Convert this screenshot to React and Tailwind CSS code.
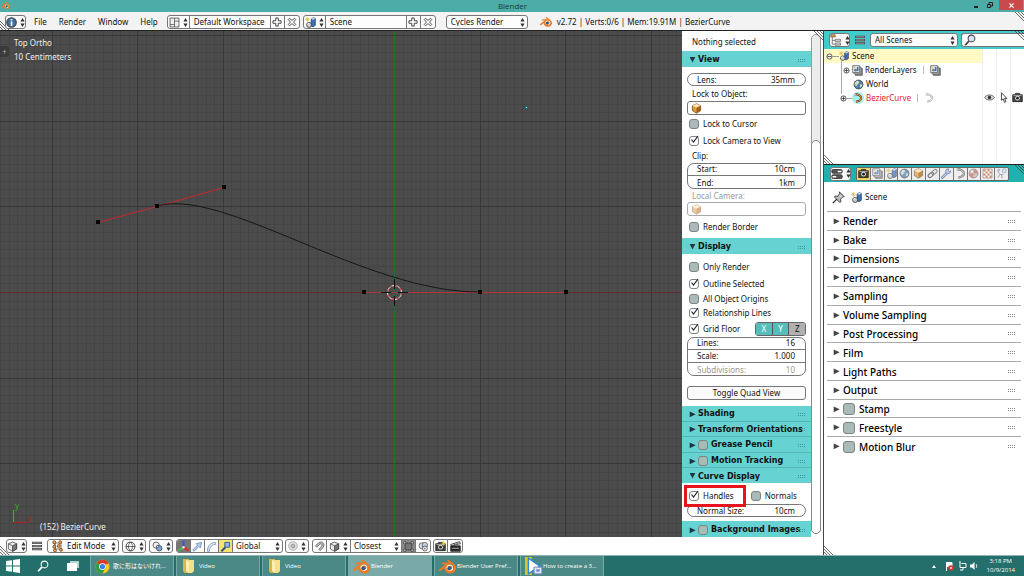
import { clsx } from 'clsx';
import { SiBlender } from 'react-icons/si';

const GRID = 85.6;
const ORIGIN = { x: 394, y: 292 };

const MENUS = ['File', 'Render', 'Window', 'Help'];

const RENDER_PANELS = [
    { label: 'Render' },
    { label: 'Bake' },
    { label: 'Dimensions' },
    { label: 'Performance' },
    { label: 'Sampling' },
    { label: 'Volume Sampling' },
    { label: 'Post Processing' },
    { label: 'Film' },
    { label: 'Light Paths' },
    { label: 'Output' },
    { label: 'Stamp', toggle: true },
    { label: 'Freestyle', toggle: true },
    { label: 'Motion Blur', toggle: true },
];

/* ---------- icons ---------- */

function Icon({ children, className = 'size-[11px]' }) {
    return (
        <svg viewBox="0 0 16 16" className={clsx('shrink-0', className)} fill="none" aria-hidden="true">
            {children}
        </svg>
    );
}

const UpDown = () => (
    <svg viewBox="0 0 5 9" className="h-[9px] w-[5px] shrink-0" fill="#333" aria-hidden="true">
        <path d="M2.5 0 4.6 3.5H.4zM2.5 9 .4 5.5h4.2z" />
    </svg>
);

const Triangle = ({ open, className }) => (
    <svg viewBox="0 0 8 8" className={clsx('size-[7px] shrink-0', className)} fill="currentColor" aria-hidden="true">
        <path d={open ? 'M.8 0h6.4L4 6.4z' : 'M.8.6 7.6 3.8.8 7z'} />
    </svg>
);

const Grip = ({ className = 'text-[#3c9c9a]' }) => (
    <svg viewBox="0 0 8 5" className={clsx('h-[5px] w-[8px] shrink-0', className)} fill="currentColor" shapeRendering="crispEdges" aria-hidden="true">
        {[0, 2, 4, 6].map((x) => (
            <path key={x} d={`M${x} 1h1v1h-1zM${x} 3h1v1h-1z`} />
        ))}
    </svg>
);

// Diagonal drag handle in the corner of an editor
const Corner = ({ className }) => (
    <svg viewBox="0 0 9 9" className={clsx('pointer-events-none absolute size-[9px]', className)} stroke="#444" strokeWidth=".8" aria-hidden="true">
        <path d="M0 0 9 9M3 0l6 6M6 0l3 3" />
    </svg>
);

const CubeIcon = ({ faded, className }) => (
    <Icon className={clsx(className || 'size-[11px]', faded && 'opacity-50')}>
        <path d="M8 1l6 3v7l-6 4-6-4V4z" fill="#e09a3e" stroke="#5c3a14" />
        <path d="M8 1l6 3-6 3-6-3z" fill="#ffe6b4" />
        <path d="M8 7l6-3v7l-6 4z" fill="#a85f14" />
    </Icon>
);

const GrayCubeIcon = () => (
    <Icon>
        <path d="M8 1.5l6 2.5v7.5L8 15l-6-3.5V4z" fill="#eee" stroke="#333" />
        <path d="M8 7l6-3v7.5L8 15z" fill="#777" stroke="#333" />
        <path d="M2 4l6 3" stroke="#333" />
    </Icon>
);

const SceneIcon = ({ className }) => (
    <Icon className={className}>
        <path d="M3.5 0v7M0 3.5h7M1.2 1.2l4.6 4.6M5.8 1.2 1.2 5.8" stroke="#e3b83c" />
        <path d="M9 3l3-2 3 1v10l-3 2-3-1z" fill="#3a72b8" stroke="#1d2f4d" />
        <path d="M9 3l3-2 3 1-3 2z" fill="#cfe2fa" />
        <circle cx="6" cy="11.5" r="3.7" fill="#ccc" stroke="#222" />
        <path d="M4 11a2 2 0 0 1 2-2" stroke="#fff" strokeWidth="1.4" />
    </Icon>
);

const LayersIcon = () => (
    <Icon>
        <path d="M5 5h10v10H5z" fill="#999" stroke="#444" />
        <path d="M3 3h10v10H3z" fill="#ddd" stroke="#444" />
        <path d="M1 1h10v10H1z" fill="#e9f0fa" stroke="#444" />
        <circle cx="5" cy="7.5" r="2" fill="#777" />
        <path d="M7 3h2.500v6H7z" fill="#3a72b8" />
        <path d="M3.500 2v3M2 3.500h3" stroke="#e3b83c" />
    </Icon>
);

const WorldIcon = () => (
    <Icon>
        <circle cx="8" cy="8" r="6.5" fill="#4f7da6" stroke="#333" />
        <path d="M4 4c3-2 5-1 5 1S6 7 6 9 4 11 3 9s-1-3 1-5zM10 8c2-1 4 0 3 2s-3 3-3 1z" fill="#c9d8c4" />
        <path d="M4.500 4.500c1-1.200 2-1.400 3-1.400" stroke="#fff" />
    </Icon>
);

const CurveIcon = ({ color = '#aaa', className }) => (
    <Icon className={className}>
        <path d="M4 2c5 0 9 3 9 6s-3 5-8 6" stroke="#333" strokeWidth="3" />
        <path d="M4 2c5 0 9 3 9 6s-3 5-8 6" stroke={color} strokeWidth="1.700" />
        <circle cx="4" cy="2.500" r="1.400" fill="#eee" stroke="#555" strokeWidth=".700" />
    </Icon>
);

const CameraIcon = () => (
    <Icon>
        <path d="M1 4h3l1-2h6l1 2h3v10H1z" fill="#444" stroke="#111" />
        <path d="M2 5h12" stroke="#ccc" />
        <circle cx="8" cy="9" r="3.400" fill="#ddd" />
        <circle cx="8" cy="9" r="2" fill="#222" />
    </Icon>
);

const RenderImageIcon = () => (
    <Icon>
        <path d="M1 4h3l1-2h6l1 2h3v10H1z" fill="#444" stroke="#111" />
        <path d="M2 5h12" stroke="#ccc" />
        <circle cx="8" cy="9" r="3.400" fill="#ddd" />
        <circle cx="8" cy="9" r="2" fill="#222" />
        <path d="M12.500 0v7M9 3.500h7M10 1l5 5M15 1l-5 5" stroke="#e8c93c" />
    </Icon>
);

const RenderAnimIcon = () => (
    <Icon>
        <path d="M1 7h14v8H1z" fill="#333" stroke="#111" />
        <path d="M1 5l13-4 1 3L2 7z" fill="#ddd" stroke="#111" />
        <path d="M5 3.500l2 2M9 2.300l2 2M3 9h10M3 12h10" stroke="#111" />
        <path d="M3 10.500h10" stroke="#eee" />
    </Icon>
);

const LinkIcon = () => (
    <Icon>
        <rect x="1" y="8" width="9" height="5" rx="2.500" transform="rotate(-40 5 10)" stroke="#444" strokeWidth="1.600" />
        <rect x="6" y="3" width="9" height="5" rx="2.500" transform="rotate(-40 11 5.500)" stroke="#666" strokeWidth="1.600" />
    </Icon>
);

const WrenchIcon = () => (
    <Icon>
        <path d="M2 14l7-7" stroke="#33507e" strokeWidth="4" strokeLinecap="round" />
        <path d="M2 14l7-7" stroke="#a9c5ee" strokeWidth="2" strokeLinecap="round" />
        <path d="M14 4a3.600 3.600 0 1 1-3-3L10.500 4l2 1.500z" fill="#a9c5ee" stroke="#33507e" />
    </Icon>
);

const MaterialIcon = () => (
    <Icon>
        <circle cx="8" cy="8" r="6.500" fill="#bbb" stroke="#555" />
        <path d="M8 8V1.500A6.500 6.500 0 0 1 14.500 8zM8 8v6.500A6.500 6.500 0 0 1 1.500 8z" fill="#c96a64" />
        <circle cx="6" cy="5" r="2" fill="#fff" opacity=".6" />
    </Icon>
);

const TextureIcon = () => (
    <Icon>
        <path d="M1.500 1.500h13v13h-13z" fill="#fff" stroke="#8a4a34" />
        {[2, 5, 8, 11].map((x, i) =>
            [2, 5, 8, 11].map((y, j) => ((i + j) % 2 ? null : <path key={`${x}-${y}`} d={`M${x} ${y}h3v3h-3z`} fill="#b0603c" />)),
        )}
    </Icon>
);

const ParticlesIcon = () => (
    <Icon>
        <path d="M3 3c0 5 4 8 8 6M6 9l-3 5M8 10l1 5" stroke="#555" />
        <circle cx="12" cy="4" r="3" fill="#cfe0f5" stroke="#5d84b8" />
        <circle cx="4" cy="3" r="1.500" fill="#cfe0f5" stroke="#5d84b8" />
    </Icon>
);

const PinIcon = () => (
    <Icon className="size-[13px]">
        <path d="M9 1l6 6-2 .500-2.500 2.500.500 3-1.500 1-6.500-6.500 1-1.500 3 .500L9.500 3z" fill="#bbb" stroke="#222" />
        <path d="M6 10l-5 5" stroke="#222" strokeWidth="1.500" />
        <path d="M9 5l3 3" stroke="#fff" />
    </Icon>
);

const OutlinerIcon = () => (
    <Icon className="size-[12px]">
        <path d="M1 1h6v3H1z" fill="#e39a3c" stroke="#555" strokeWidth=".8" />
        <path d="M3 4v9.500h4M3 8.500h4" stroke="#555" />
        <path d="M7 7h7v3H7zM7 12h7v3H7z" fill="#ccc" stroke="#555" strokeWidth=".8" />
    </Icon>
);

const PropertiesIcon = () => (
    <Icon className="size-[12px]">
        <rect x="1" y="2" width="14" height="5" rx="2" fill="#555" stroke="#222" />
        <rect x="1" y="9" width="14" height="5" rx="2" fill="#555" stroke="#222" />
        <path d="M9 3.500h5v2H9zM2 10.500h5v2H2z" fill="#fff" />
    </Icon>
);

const InfoIcon = () => (
    <Icon className="size-[11px]">
        <circle cx="8" cy="8" r="7" fill="#3f6f9e" stroke="#444" strokeWidth="1.500" />
        <path d="M8 3v2M8 6.500V13" stroke="#fff" strokeWidth="2.500" />
    </Icon>
);

const LayoutIcon = () => (
    <Icon>
        <path d="M1.500 1.500h13v13h-13z" fill="#eee" stroke="#333" />
        <path d="M8 1.500v13M8 6h6.500M1.500 11h6.500" stroke="#444" />
    </Icon>
);

const MenuLines = () => (
    <Icon className="size-[10px]">
        <path d="M0 3h16M0 8h16M0 13h16" stroke="#444" strokeWidth="3.600" />
        <path d="M1 3h14M1 8h14M1 13h14" stroke="#aaa" strokeWidth="1.400" />
    </Icon>
);

const SearchIcon = ({ color = '#444', fill = 'none', className }) => (
    <Icon className={className}>
        <path d="M6.500 9.500 1.500 15" stroke={color} strokeWidth="2.400" />
        <circle cx="10" cy="6" r="4.500" fill={fill} stroke={color} strokeWidth="1.400" />
    </Icon>
);

const PlusIcon = () => (
    <Icon className="size-[10px]">
        <path d="M6 1.500h4V6h4.500v4H10v4.500H6V10H1.500V6H6z" fill="#fff" stroke="#333" strokeWidth="1.400" />
    </Icon>
);

const CrossIcon = () => (
    <Icon className="size-[10px]">
        <path d="M2 4l2-2 4 3.500L12 2l2 2-3.500 4L14 12l-2 2-4-3.500L4 14l-2-2 3.500-4z" fill="#fff" stroke="#333" strokeWidth="1.400" />
    </Icon>
);

const EditModeIcon = () => (
    <Icon className="size-[12px]">
        <path d="M4 4l8 0v8H4zM4 4v9" stroke="#555" />
        {[[3, 3], [11, 3], [3, 9], [9, 8], [4, 14], [12, 13]].map(([x, y]) => (
            <circle key={`${x}-${y}`} cx={x} cy={y} r="2" fill="#f0a45a" stroke="#6d3d12" />
        ))}
    </Icon>
);

const WireIcon = () => (
    <Icon>
        <circle cx="8" cy="8" r="6.500" stroke="#333" strokeWidth="1.300" />
        <path d="M1.500 8h13M8 1.500c-4 4-4 9 0 13M8 1.500c4 4 4 9 0 13" stroke="#333" />
    </Icon>
);

const PivotIcon = () => (
    <Icon>
        <circle cx="6" cy="6" r="4.500" fill="#eee" stroke="#333" />
        <circle cx="10.500" cy="10.500" r="4" fill="#7ba6dd" stroke="#333" />
        <circle cx="8" cy="8" r="1.500" fill="#fff" stroke="#333" />
    </Icon>
);

const ManipulatorIcon = () => (
    <Icon className="size-[13px]">
        <path d="M8 9V1" stroke="#3456d8" strokeWidth="2.600" />
        <path d="M8 9l-6.500 4" stroke="#3fbf3f" strokeWidth="2.600" />
        <path d="M8 9l6.500 4" stroke="#e02a2a" strokeWidth="2.600" />
        <circle cx="8" cy="9" r="1.500" fill="#eee" />
    </Icon>
);

const TranslateIcon = () => (
    <Icon>
        <path d="M1 13l7-7-2-2 8-2-2 8-2-2-7 7z" fill="#b5cdf0" stroke="#5d7ba8" />
    </Icon>
);

const RotateIcon = () => (
    <Icon>
        <path d="M2 15C2 7 7 2 14 2v3C9 5 5 9 5 15z" fill="#dbe8fa" stroke="#6883a8" />
    </Icon>
);

const ScaleIcon = () => (
    <Icon>
        <path d="M2 15l6-6" stroke="#35558a" strokeWidth="3" />
        <path d="M7 2h7v7H7z" fill="#8fb4ea" stroke="#35558a" strokeWidth="1.300" />
    </Icon>
);

const ProportionalIcon = () => (
    <Icon className="size-[10px]">
        <circle cx="8" cy="8" r="7" fill="#ddd" stroke="#999" />
        <circle cx="8" cy="8" r="3" fill="#bbb" stroke="#888" />
    </Icon>
);

const MagnetIcon = () => (
    <Icon>
        <path d="M2 7l5-4.500c5-3.500 10 2 6.500 6.500L9 14l-2-2 4-4.500c2-2-.500-4.500-2.500-3L4 9z" fill="#bbb" stroke="#555" />
    </Icon>
);

const SnapTargetIcon = () => (
    <Icon>
        <rect x="3" y="3" width="10" height="10" stroke="#111" strokeDasharray="2 1" fill="#777" />
        <path d="M1 1h3v3H1zM12 1h3v3h-3zM1 12h3v3H1zM12 12h3v3h-3z" fill="#ddd" stroke="#222" strokeWidth=".800" />
    </Icon>
);

const SnapPeelIcon = () => (
    <Icon>
        <circle cx="6" cy="7" r="4.500" fill="#ddd" stroke="#444" />
        <circle cx="10" cy="6" r="4" fill="#bcd2ee" stroke="#444" />
        <circle cx="10" cy="11" r="3.500" fill="#eee" stroke="#333" />
        <circle cx="10" cy="11" r="1" fill="#333" />
    </Icon>
);

const EyeIcon = () => (
    <Icon>
        <path d="M1 8c3-5 11-5 14 0-3 5-11 5-14 0z" fill="#ddd" stroke="#333" />
        <circle cx="8" cy="8" r="2.500" fill="#333" />
    </Icon>
);

const ArrowIcon = () => (
    <Icon>
        <path d="M5 1v11l2.500-2 2 5 2-1-2-4.500H13z" fill="#fff" stroke="#222" strokeWidth="1.200" />
    </Icon>
);

const BlenderLogo = ({ className }) => (
    <svg viewBox="0 0 24 24" className={clsx('shrink-0', className)} aria-hidden="true">
        <circle cx="14.500" cy="14.500" r="5.500" fill="#fff" />
        <SiBlender width="24" height="24" size={24} color="#ee7a22" />
        <circle cx="14.500" cy="14.500" r="2.800" fill="#1c5c9c" />
    </svg>
);

const ChromeLogo = () => (
    <Icon className="size-[15px]">
        <circle cx="8" cy="8" r="7.500" fill="#f2c81d" />
        <path d="M8 8 1.500 4.200A7.500 7.500 0 0 1 14.500 4.200z" fill="#dd3a2c" />
        <path d="M8 8 1.500 4.200A7.500 7.500 0 0 0 8 15.500L11 9.500z" fill="#2f9e4b" />
        <path d="M8 4.500h6.700L14.200 4H8z" fill="#dd3a2c" />
        <circle cx="8" cy="8" r="3.600" fill="#fff" />
        <circle cx="8" cy="8" r="2.800" fill="#3f7fe0" />
    </Icon>
);

const FolderIcon = () => (
    <Icon className="size-[16px]">
        <path d="M2 1h6v14H3.500L2 13z" fill="#d8b84a" />
        <path d="M5 2h8v11l-2 2H8V4z" fill="#f7e08a" />
        <path d="M8 4l-3-2v11l3 2z" fill="#fdf0b4" />
    </Icon>
);

const PlayerIcon = () => (
    <Icon className="size-[18px]">
        <path d="M0 0h6v16H0z" fill="#d9c52a" />
        <path d="M3 1l10 7-10 7z" fill="#fff" stroke="#2e86d8" strokeWidth="1.200" />
        <path d="M8 9h7v6H8z" fill="#dfe6f5" stroke="#6c86c0" strokeWidth=".800" />
        <path d="M10 11h3v2h-3z" fill="#6c86c0" />
    </Icon>
);

/* ---------- controls ---------- */

function IconMenu({ label, children, className }) {
    return (
        <button type="button" aria-label={label} className={clsx('flex h-[14px] items-center justify-center gap-[3px] rounded-[3px] border border-[#777] bg-[#fafafa]', className)}>
            {children}
            <UpDown />
        </button>
    );
}

function Dropdown({ label, value, icon, className }) {
    return (
        <label className={clsx('flex h-[14px] items-center gap-[3px] rounded-[3px] border border-[#777] bg-[#fdfdfd] pr-[2px] pl-[4px]', className)}>
            {icon}
            <select aria-label={label} className="h-full min-w-0 flex-1 appearance-none bg-transparent leading-none outline-none">
                <option>{value}</option>
            </select>
            <UpDown />
        </label>
    );
}

function DataBlock({ label, value, icon }) {
    return (
        <div className="flex h-[14px] w-[133px] items-stretch divide-x divide-[#777] overflow-hidden rounded-[3px] border border-[#777] bg-[#fdfdfd]">
            <button type="button" aria-label={`Browse ${label}`} className="flex w-[22px] items-center justify-center gap-[3px]">
                {icon}
                <UpDown />
            </button>
            <input aria-label={label} defaultValue={value} className="min-w-0 flex-1 bg-transparent px-[4px] outline-none" />
            <button type="button" aria-label={`Add ${label}`} className="flex w-[14px] items-center justify-center"><PlusIcon /></button>
            <button type="button" aria-label={`Remove ${label}`} className="flex w-[14px] items-center justify-center"><CrossIcon /></button>
        </div>
    );
}

function Tick({ label, checked = false, size = 'size-[10px]' }) {
    return (
        <span className="relative flex shrink-0">
            <input
                type="checkbox"
                aria-label={label}
                defaultChecked={checked}
                className={clsx('peer appearance-none rounded-[3px] border border-[#7a8584] bg-[#a9bab9] checked:bg-white', size)}
            />
            <svg viewBox="0 0 9 9" className="pointer-events-none absolute -top-px left-px hidden size-[9px] peer-checked:block" fill="none" stroke="#222" strokeWidth="1.200">
                <path d="M1.500 4.500 3.500 7 8 1" />
            </svg>
        </span>
    );
}

function CheckRow({ label, checked, className = 'h-[17px]' }) {
    return (
        <label className={clsx('flex items-center gap-[4px] pl-[2px]', className)}>
            <Tick label={label} checked={checked} />
            {label}
        </label>
    );
}

function NumberRow({ label, value, disabled }) {
    return (
        <label className={clsx('flex h-[13px] items-center pr-[11px] pl-[10px]', disabled && 'text-[#999]')}>
            <span className="shrink-0">{label}</span>
            <input defaultValue={value} disabled={disabled} className="w-0 min-w-0 flex-1 bg-transparent text-right outline-none" />
        </label>
    );
}

function NumberGroup({ rows, className }) {
    return (
        <div className={clsx('flex flex-col divide-y divide-[#777] overflow-hidden rounded-[7px] outline outline-[#777] -outline-offset-1', className)}>
            {rows.map((row) => (
                <NumberRow key={row.label} {...row} />
            ))}
        </div>
    );
}

function ObjectField({ label, disabled }) {
    return (
        <>
            <span className={clsx('flex items-center pl-[5px]', disabled ? 'h-[13px] text-[#999]' : 'h-[15px]')}>{label}</span>
            <label className={clsx('flex h-[14px] items-center rounded-[3px] border pl-[3px]', disabled ? 'border-[#aaa]' : 'border-[#777]')}>
                <CubeIcon faded={disabled} />
                <input aria-label={label} disabled={disabled} className="min-w-0 flex-1 bg-transparent outline-none" />
            </label>
        </>
    );
}

function PanelHeader({ label, open, toggle, className = 'h-[16px]' }) {
    return (
        <div className={clsx("flex items-center bg-[#66d3d2] pt-[2px] pr-[5px] pl-[7px] font-['DejaVu_Sans',sans-serif] text-[8px] leading-none font-bold", className)}>
            <button type="button" aria-expanded={!!open} aria-label={label} className="mr-[2px] flex text-[#234]">
                <Triangle open={open} />
            </button>
            {toggle && (
                <span className="mr-[3px] flex">
                    <Tick label={`Enable ${label}`} />
                </span>
            )}
            <h2 className="min-w-0 flex-1 overflow-visible whitespace-nowrap">{label}</h2>
            <Grip />
        </div>
    );
}

/* ---------- editors ---------- */

function TitleBar() {
    return (
        <header className="flex h-[12px] shrink-0 items-start bg-[#4cada8] font-['Open_Sans',sans-serif] text-[#1b3b3a]">
            <div className="flex flex-1 pt-px pl-px"><BlenderLogo className="size-[9px]" /></div>
            <h1 className="text-[8px] leading-[12px]">Blender</h1>
            <div className="flex flex-1 items-center justify-end">
                <button type="button" aria-label="Minimize" className="flex h-[10px] w-[14px] items-center justify-center">
                    <span className="mt-[3px] h-[2px] w-[4px] bg-[#222]" />
                </button>
                <button type="button" aria-label="Restore" className="flex h-[10px] w-[14px] items-center justify-center">
                    <svg viewBox="0 0 6 6" className="size-[6px]" fill="none" stroke="#222"><path d="M.500 2.500h3v3h-3zM2 2V.500h3.500V4H4" /></svg>
                </button>
                <button type="button" aria-label="Close" className="mr-px ml-[2px] flex h-[10px] w-[24px] items-center justify-center bg-[#c84b4b]">
                    <svg viewBox="0 0 6 6" className="size-[5px]" stroke="#fff" strokeWidth="1.400"><path d="M.500.500l5 5M5.500.500l-5 5" /></svg>
                </button>
            </div>
        </header>
    );
}

function InfoBar() {
    return (
        <div className="relative flex h-[19px] shrink-0 items-center border-b border-[#222] bg-[#f3f3f3] pt-[2px] pl-[5px]">
            <Corner className="bottom-0 left-0 rotate-180" />
            <IconMenu label="Editor type" className="relative w-[21px]"><InfoIcon /></IconMenu>
            <nav className="ml-[8px] flex gap-[12px]">
                {MENUS.map((menu) => (
                    <button key={menu} type="button">{menu}</button>
                ))}
            </nav>
            <div className="ml-[9px] flex gap-[3px]">
                <DataBlock label="Screen" value="Default Workspace" icon={<LayoutIcon />} />
                <DataBlock label="Scene" value="Scene" icon={<SceneIcon />} />
            </div>
            <Dropdown label="Render engine" value="Cycles Render" className="ml-[10px] w-[82px]" />
            <BlenderLogo className="ml-[12px] size-[12px]" />
            <p className="ml-[5px] whitespace-nowrap">v2.72 | Verts:0/6 | Mem:19.91M | BezierCurve</p>
            <Corner className="top-0 right-0" />
        </div>
    );
}

function gridLines(from, to) {
    const lines = [];
    for (let i = from; i <= to; i++) {
        lines.push({ i, offset: Math.round((i * GRID) / 10) });
    }
    return lines;
}

function Canvas() {
    const lines = gridLines(-100, 200);
    const points = [[98, 222], [157, 206], [224, 187], [364, 292], [480, 292], [566, 292]];

    return (
        <div className="relative min-w-0 flex-1 overflow-hidden bg-[#4b4b4b] text-[#eee]">
            {/* the drawing keeps window coordinates, hence the shift by the bars above */}
            <svg className="absolute inset-0 size-full" aria-label="3D view">
                <g transform="translate(0 -31)">
                    <g shapeRendering="crispEdges">
                        {[false, true].map((major) =>
                            lines.filter(({ i }) => (i % 10 === 0) === major).map(({ i, offset }) => (
                                <g key={i} fill={major ? '#383838' : '#444'}>
                                    <rect x={ORIGIN.x + offset} y="0" width="1" height="3000" />
                                    <rect x="0" y={ORIGIN.y + offset} width="4000" height="1" />
                                </g>
                            )),
                        )}
                        <rect x="0" y={ORIGIN.y} width="4000" height="1" fill="#642c2f" />
                        <rect x={ORIGIN.x} y="0" width="1" height="3000" fill="#2c6a2e" />
                        <path d="M364 292.500h202" stroke="#b5323a" />
                    </g>
                    <path d="M98 222.500 157 206.500 224 187.500" stroke="#c8262e" fill="none" />
                    <path d="M157 206C224 187 365 292.500 480 292" stroke="#161616" fill="none" />
                    {points.map(([x, y]) => (
                        <rect key={x} x={x - 2} y={y - 2} width="4" height="4" fill="#000" />
                    ))}
                    <circle cx="394.500" cy="292.500" r="7" fill="none" stroke="#eee" />
                    <circle cx="394.500" cy="292.500" r="7" fill="none" stroke="#d22" strokeDasharray="2.750 2.750" />
                    <path d="M381 292.500h10M398 292.500h10M394.500 279v10M394.500 296v10" stroke="#111" />
                    <rect x="525" y="106" width="3" height="3" fill="#1c6d70" />
                    <rect x="526" y="107" width="1" height="1" fill="#7ff" />
                    <path d="M13.500 523V510" stroke="#3fae28" />
                    <path d="M13 522.500h14" stroke="#b52020" />
                    <text x="15" y="509" fill="#3fae28" fontSize="8">y</text>
                    <text x="28" y="522" fill="#b52020" fontSize="8">x</text>
                </g>
            </svg>
            <button type="button" aria-label="Show tool shelf" className="absolute top-[15px] left-0 flex h-[11px] w-[9px] items-center justify-center rounded-r-[3px] bg-[#3a3a3a] leading-none text-[#aaa]">
                +
            </button>
            <p className="absolute top-[7px] left-[14px] leading-[10px]">Top Ortho</p>
            <p className="absolute top-[21px] left-[14px] leading-[10px]">10 Centimeters</p>
            <p className="absolute bottom-[5px] left-[40px] leading-[10px]">(152) BezierCurve</p>
        </div>
    );
}

function PropertiesShelf() {
    return (
        <aside className="flex w-[141px] shrink-0 bg-white">
            <div className="relative flex w-[129px] flex-col">
                <p className="flex h-[20px] items-center pt-[2px] pl-[10px]">Nothing selected</p>

                <PanelHeader label="View" open />
                <div className="flex flex-col px-[5px] pt-[6px]">
                    <NumberGroup rows={[{ label: 'Lens:', value: '35mm' }]} />
                    <ObjectField label="Lock to Object:" />
                    <CheckRow label="Lock to Cursor" />
                    <CheckRow label="Lock Camera to View" checked />
                    <span className="flex h-[14px] items-center pl-[5px]">Clip:</span>
                    <NumberGroup rows={[{ label: 'Start:', value: '10cm' }, { label: 'End:', value: '1km' }]} />
                    <ObjectField label="Local Camera:" disabled />
                    <CheckRow label="Render Border" className="h-[22px]" />
                </div>

                <PanelHeader label="Display" open />
                <div className="flex flex-col px-[5px] pt-[4px] pb-[6px]">
                    <CheckRow label="Only Render" />
                    <CheckRow label="Outline Selected" checked />
                    <CheckRow label="All Object Origins" className="h-[14px]" />
                    <CheckRow label="Relationship Lines" checked className="h-[14px]" />
                    <div className="flex items-center justify-between">
                        <CheckRow label="Grid Floor" checked />
                        <div className="flex h-[14px] w-[51px] divide-x divide-[#555] overflow-hidden rounded-[3px] border border-[#666]">
                            <button type="button" className="flex-1 bg-[#57bdbb] leading-none text-white">X</button>
                            <button type="button" className="flex-1 bg-[#57bdbb] leading-none text-white">Y</button>
                            <button type="button" className="flex-1 bg-[#b0b0b0] leading-none">Z</button>
                        </div>
                    </div>
                    <NumberGroup
                        rows={[
                            { label: 'Lines:', value: '16' },
                            { label: 'Scale:', value: '1.000' },
                            { label: 'Subdivisions:', value: '10', disabled: true },
                        ]}
                    />
                    <button type="button" className="mt-[10px] h-[14px] rounded-[3px] border border-[#777] bg-[#fafafa] leading-none">Toggle Quad View</button>
                </div>

                <div className="flex h-[77px] flex-col divide-y divide-[#55b5b4]">
                    <PanelHeader label="Shading" className="flex-1" />
                    <PanelHeader label="Transform Orientations" className="flex-1" />
                    <PanelHeader label="Grease Pencil" toggle className="flex-1" />
                    <PanelHeader label="Motion Tracking" toggle className="flex-1" />
                    <PanelHeader label="Curve Display" open className="flex-1" />
                </div>
                <div className="relative flex flex-col px-[5px] pt-[4px] pb-[4px]">
                    <div className="flex gap-[15px]">
                        <CheckRow label="Handles" checked />
                        <CheckRow label="Normals" />
                    </div>
                    <NumberGroup rows={[{ label: 'Normal Size:', value: '10cm' }]} />
                    <div className="pointer-events-none absolute top-[2px] left-[2px] h-[22px] w-[62px] border-[3px] border-[#e8141c]" />
                </div>
                <PanelHeader label="Background Images" toggle />
            </div>
            <div className="relative flex flex-1 flex-col pt-[3px] pr-[2px] pb-[3px]">
                <div className="flex flex-1 flex-col rounded-[5px] border border-[#999] bg-[#ececec] pt-[105px]">
                    <div className="-mx-px -mb-px flex-1 rounded-[5px] border border-[#888] bg-white" />
                </div>
                <Corner className="top-0 right-0" />
            </div>
        </aside>
    );
}

const toolButton = 'flex w-[14px] items-center justify-center';

function ViewHeader() {
    return (
        <div className="relative flex h-[18px] shrink-0 items-center bg-white pl-[6px]">
            <Corner className="bottom-0 left-0 rotate-180" />
            <IconMenu label="Editor type" className="relative w-[21px]"><GrayCubeIcon /></IconMenu>
            <button type="button" aria-label="Menus" className="ml-[5px] flex"><MenuLines /></button>
            <Dropdown label="Mode" value="Edit Mode" icon={<EditModeIcon />} className="ml-[5px] w-[72px] pl-[2px]" />
            <IconMenu label="Viewport shading" className="ml-[3px] w-[24px]"><WireIcon /></IconMenu>
            <IconMenu label="Pivot point" className="ml-[3px] w-[24px]"><PivotIcon /></IconMenu>
            <div className="ml-[3px] flex h-[14px] divide-x divide-[#777] overflow-hidden rounded-[3px] border border-[#777]">
                <button type="button" aria-label="Manipulator" className={clsx(toolButton, 'bg-[#777]')}><ManipulatorIcon /></button>
                <button type="button" aria-label="Translate" className={toolButton}><TranslateIcon /></button>
                <button type="button" aria-label="Rotate" className={toolButton}><RotateIcon /></button>
                <button type="button" aria-label="Scale" className={clsx(toolButton, 'bg-[#f4e36e]')}><ScaleIcon /></button>
                <label className="flex w-[49px] items-center pr-[2px] pl-[3px]">
                    <select aria-label="Orientation" className="min-w-0 flex-1 appearance-none bg-transparent leading-none outline-none">
                        <option>Global</option>
                    </select>
                    <UpDown />
                </label>
            </div>
            <IconMenu label="Proportional editing" className="ml-[2px] w-[24px]"><ProportionalIcon /></IconMenu>
            <div className="ml-[3px] flex h-[14px] divide-x divide-[#777] overflow-hidden rounded-[3px] border border-[#777]">
                <button type="button" aria-label="Snap" className={toolButton}><MagnetIcon /></button>
                <button type="button" aria-label="Snap element" className="flex w-[24px] items-center justify-center gap-[3px]"><GrayCubeIcon /><UpDown /></button>
                <label className="flex w-[51px] items-center pr-[2px] pl-[3px]">
                    <select aria-label="Snap target" className="min-w-0 flex-1 appearance-none bg-transparent leading-none outline-none">
                        <option>Closest</option>
                    </select>
                    <UpDown />
                </label>
                <button type="button" aria-label="Project elements" className={clsx(toolButton, 'bg-[#8a8a8a]')}><SnapTargetIcon /></button>
                <button type="button" aria-label="Peel object" className={toolButton}><SnapPeelIcon /></button>
            </div>
            <div className="ml-[2px] flex h-[14px] divide-x divide-[#777] overflow-hidden rounded-[3px] border border-[#777]">
                <button type="button" aria-label="Render image" className={toolButton}><RenderImageIcon /></button>
                <button type="button" aria-label="Render animation" className={toolButton}><RenderAnimIcon /></button>
            </div>
        </div>
    );
}

const Expander = ({ open }) => (
    <button type="button" aria-label={open ? 'Collapse' : 'Expand'} className="relative flex shrink-0">
        <svg viewBox="0 0 7 7" className="size-[7px]" fill="#fff" stroke="#333" strokeWidth=".800">
            <circle cx="3.500" cy="3.500" r="2.600" />
            <path d={open ? 'M1.500 3.500h4' : 'M1.500 3.500h4M3.500 1.500v4'} />
        </svg>
    </button>
);

const RESTRICT_TOGGLES = [
    ['Visible', EyeIcon],
    ['Selectable', ArrowIcon],
    ['Renderable', CameraIcon],
];

function Outliner() {
    return (
        <section className="relative flex h-[134px] shrink-0 flex-col border-b border-[#222]">
            <div className="flex h-[18px] shrink-0 items-center bg-[#46c9cd] pl-[5px]">
                <IconMenu label="Editor type" className="w-[21px]"><OutlinerIcon /></IconMenu>
                <button type="button" aria-label="Menus" className="ml-[5px] flex"><MenuLines /></button>
                <Dropdown label="Display mode" value="All Scenes" className="ml-[5px] w-[88px]" />
                <label className="ml-[3px] flex h-[14px] flex-1 items-center rounded-l-[3px] border border-r-0 border-[#777] bg-white pl-[2px]">
                    <SearchIcon fill="#d5e4f2" className="size-[12px]" />
                    <input type="search" aria-label="Search" className="w-0 flex-1 bg-transparent outline-none" />
                </label>
            </div>
            <div className="flex flex-1">
                <ul className="relative min-w-0 flex-1">
                    <li className="flex h-[14px] items-center bg-[#fff9c4] pl-[2px]">
                        <Expander open />
                        <span className="h-px w-[6px] bg-[#999]" />
                        <SceneIcon className="mr-[3px] size-[10px]" />
                        Scene
                    </li>
                    <li className="flex h-[14px] items-center pl-[19px]">
                        <Expander />
                        <span className="mr-[2px] ml-[2px] flex"><LayersIcon /></span>
                        RenderLayers
                        <span className="mx-[6px] h-[8px] w-px bg-[#bbb]" />
                        <LayersIcon />
                    </li>
                    <li className="flex h-[14px] items-center gap-[2px] pl-[29px]">
                        <WorldIcon />
                        World
                    </li>
                    <li className="flex h-[14px] items-center pl-[16px] text-[#e61c24]">
                        <Expander />
                        <span className="h-px w-[5px] bg-[#999]" />
                        <span className="mr-[2px] flex rounded-full bg-[#a9e9e6] p-px"><CurveIcon color="#f08a30" className="size-[10px]" /></span>
                        BezierCurve
                        <span className="mx-[6px] h-[8px] w-px bg-[#bbb]" />
                        <span className="opacity-50"><CurveIcon color="#ddd" className="size-[10px]" /></span>
                    </li>
                    <li aria-hidden="true" className="absolute top-[11px] left-[17px] h-[34px] w-px bg-[#aaa]" />
                </ul>
                <div className="flex w-[42px] shrink-0 divide-x divide-[#eee] border-l border-[#eee]">
                    {RESTRICT_TOGGLES.map(([label, ToggleIcon]) => (
                        <div key={label} className="flex-1 pt-[43px] pl-px">
                            <button type="button" aria-label={label} className="flex"><ToggleIcon /></button>
                        </div>
                    ))}
                </div>
            </div>
            <Corner className="top-0 right-0" />
            <Corner className="bottom-0 left-0 rotate-180" />
        </section>
    );
}

const CONTEXT_TABS = [
    ['Render', CameraIcon],
    ['Render layers', LayersIcon],
    ['Scene', SceneIcon],
    ['World', WorldIcon],
    ['Object', CubeIcon],
    ['Constraints', LinkIcon],
    ['Modifiers', WrenchIcon],
    ['Data', CurveIcon],
    ['Material', MaterialIcon],
    ['Texture', TextureIcon],
    ['Particles', ParticlesIcon],
];

function PropertiesEditor() {
    return (
        <section className="relative flex min-h-0 flex-1 flex-col">
            <div className="flex h-[17px] shrink-0 items-center bg-[#20b0ad] pl-[6px]">
                <IconMenu label="Editor type" className="w-[21px]"><PropertiesIcon /></IconMenu>
                <div className="ml-[5px] flex h-[14px] w-[153px] divide-x divide-[#777] overflow-hidden rounded-[2px] border border-[#666] bg-[#eee]">
                    {CONTEXT_TABS.map(([label, TabIcon], index) => (
                        <button key={label} type="button" aria-label={label} className={clsx('flex flex-1 items-center justify-center', index === 0 && 'bg-[#f4d96a]')}>
                            <span className={clsx('flex', index > 0 && 'opacity-70')}><TabIcon /></span>
                        </button>
                    ))}
                </div>
            </div>
            <div className="flex h-[29px] shrink-0 items-center pt-px pl-[8px]">
                <button type="button" aria-label="Pin" className="mr-[6px] flex"><PinIcon /></button>
                <SceneIcon className="mr-[3px] size-[11px]" />
                Scene
            </div>
            <div className="mx-[3px] flex h-[244px] flex-col text-[10px] leading-none">
                {RENDER_PANELS.map(({ label, toggle }) => (
                    <div key={label} className="flex flex-1 items-center border-t border-[#aaa] pt-px pr-[5px] pl-[6px]">
                        <button type="button" aria-expanded="false" aria-label={label} className="mr-[3px] flex text-[#444]">
                            <Triangle />
                        </button>
                        {toggle && (
                            <span className="mr-[4px] flex">
                                <Tick label={`Enable ${label}`} size="size-[12px]" />
                            </span>
                        )}
                        <h2 className="flex-1 font-medium text-black">{label}</h2>
                        <Grip className="text-[#888]" />
                    </div>
                ))}
            </div>
            <Corner className="top-0 right-0" />
            <Corner className="bottom-0 left-0 rotate-180" />
        </section>
    );
}

const TASKS = [
    { label: '歌に形はないけれ...', icon: <ChromeLogo /> },
    { label: 'Video', icon: <FolderIcon /> },
    { label: 'Video', icon: <FolderIcon /> },
    { label: 'Blender', icon: <BlenderLogo className="size-[17px]" />, active: true },
    { label: 'Blender User Pref...', icon: <BlenderLogo className="size-[17px]" /> },
    { label: 'How to create a 3...', icon: <PlayerIcon /> },
];

function Taskbar() {
    return (
        <footer className="flex h-[21px] shrink-0 items-stretch border-t border-[#8fb5b3] bg-[#246f6b] font-['Open_Sans','Noto_Sans_CJK_JP',sans-serif] text-[6px] text-white">
            <button type="button" aria-label="Start" className="ml-[6px] flex items-center">
                <svg viewBox="0 0 14 14" className="size-[14px]" fill="#fff"><path d="M0 2l6-.800V6.600H0zM7 1l7-1v6.600H7zM0 7.400h6v5.400L0 12zM7 7.400h7V14l-7-1z" /></svg>
            </button>
            <button type="button" aria-label="Search" className="ml-[17px] flex items-center"><SearchIcon color="#fff" className="size-[12px]" /></button>
            <button type="button" aria-label="Task view" className="ml-[18px] flex items-center">
                <svg viewBox="0 0 12 10" className="h-[10px] w-[12px]"><path d="M3 0h9v7H3z" fill="#b9d2d0" /><path d="M0 2h10v8H0z" fill="#fff" /></svg>
            </button>
            <div className="ml-[11px] flex gap-[2px]">
                {TASKS.map(({ label, icon, active }, index) => (
                    <button
                        key={index}
                        type="button"
                        className={clsx('flex w-[84px] items-center border-x border-[#79a9a6] pl-[4px] text-left whitespace-nowrap', active ? 'bg-[#79aaa8]' : 'bg-[#4b8986]')}
                    >
                        <span className="flex w-[18px] shrink-0">{icon}</span>
                        {label}
                    </button>
                ))}
            </div>
            <div className="ml-auto flex items-center pr-[9px]">
                <svg viewBox="0 0 46 10" className="mr-[9px] h-[10px] w-[46px]" fill="none" aria-hidden="true">
                    <path d="M0 7h4L2 4z" fill="#fff" />
                    <path d="M14.500 1v9M15 1.500h5v4h-5z" fill="#fff" stroke="#fff" />
                    <circle cx="19" cy="7" r="2.800" fill="#d33" />
                    <path d="M18 6l2 2M20 6l-2 2" stroke="#fff" strokeWidth=".700" />
                    <path d="M29.500 2.500h4.500v4h-6v-5M27 1h2M31 6.500V9h-3" stroke="#fff" />
                    <path d="M38 3.500h2L42.500 1v8L40 6.500h-2z" fill="#fff" />
                    <path d="M44 3c1 1 1 3 0 4" stroke="#fff" strokeWidth=".800" />
                </svg>
                <p className="text-center leading-[9px]">
                    3:18 PM
                    <br />
                    10/9/2014
                </p>
            </div>
        </footer>
    );
}

export default function App() {
    return (
        <div className="flex h-screen min-h-[576px] flex-col overflow-hidden bg-white font-['Noto_Sans',sans-serif] text-[8px] text-[#111]">
            <TitleBar />
            <InfoBar />
            <main className="flex min-h-0 flex-1">
                <div className="flex min-w-0 flex-1 flex-col">
                    <div className="flex min-h-0 flex-1">
                        <Canvas />
                        <PropertiesShelf />
                    </div>
                    <ViewHeader />
                </div>
                <div className="flex w-[201px] shrink-0 flex-col border-l border-[#444] bg-white">
                    <Outliner />
                    <PropertiesEditor />
                </div>
            </main>
            <Taskbar />
        </div>
    );
}
